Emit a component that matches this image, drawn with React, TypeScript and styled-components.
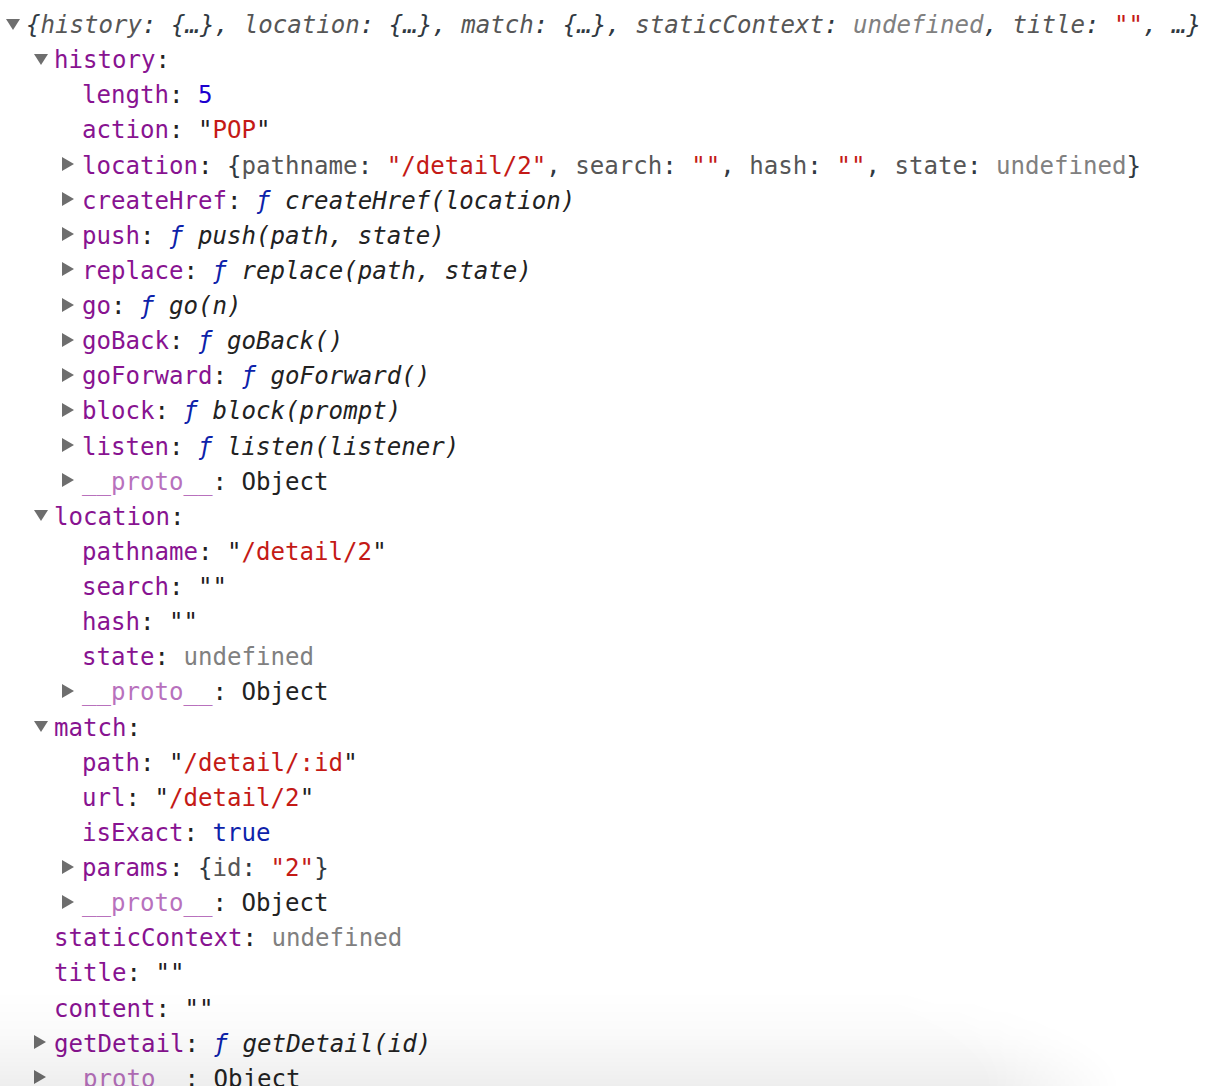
import React from "react";
import styled, { createGlobalStyle } from "styled-components";

const GlobalStyle = createGlobalStyle`
  html, body {
    margin: 0;
    padding: 0;
    background: #ffffff;
    overflow: hidden;
  }
`;

const Console = styled.div`
  position: relative;
  height: 1086px;
  overflow: hidden;
  padding-top: 8px;
  box-sizing: border-box;
  font-family: "DejaVu Sans Mono", "Liberation Mono", monospace;
  font-size: 24.1px;
  line-height: 35.14px;
  color: #222222;
`;

const Row = styled.div<{ $depth: number }>`
  display: flex;
  align-items: center;
  height: 35.14px;
  padding-left: ${(p) => p.$depth * 28 + 6}px;
  white-space: pre;
`;

const Toggle = styled.span`
  flex: none;
  width: 20px;
  height: 35.14px;
  display: flex;
  align-items: center;
  justify-content: flex-start;
  svg {
    display: block;
    margin-top: -4px;
  }
`;

const Key = styled.span<{ $dim?: boolean }>`
  color: ${(p) => (p.$dim ? "#b871bd" : "#881391")};
`;

const Str = styled.span`
  color: #c41a16;
`;

const Num = styled.span`
  color: #1c00cf;
`;

const Bool = styled.span`
  color: #0d22aa;
`;

const Undef = styled.span`
  color: #808080;
`;

const FnMark = styled.span`
  color: #0d22aa;
  font-style: italic;
`;

const Sig = styled.span`
  font-style: italic;
  color: #222222;
`;

const Preview = styled.span<{ $italic?: boolean }>`
  font-style: ${(p) => (p.$italic ? "italic" : "normal")};
  color: #303942;
`;

const PKey = styled.span`
  color: #565656;
`;

const BottomShade = styled.div`
  position: absolute;
  left: 0;
  right: 0;
  bottom: 0;
  height: 95px;
  pointer-events: none;
  background: linear-gradient(
    to bottom,
    rgba(0, 0, 0, 0) 0%,
    rgba(0, 0, 0, 0.02) 45%,
    rgba(0, 0, 0, 0.065) 100%
  );
  -webkit-mask-image: radial-gradient(
    ellipse 1120px 190px at 0% 100%,
    #000 88%,
    transparent 100%
  );
  mask-image: radial-gradient(
    ellipse 1120px 190px at 0% 100%,
    #000 88%,
    transparent 100%
  );
`;

type ToggleState = "open" | "closed" | null;

const Triangle: React.FC<{ state: ToggleState }> = ({ state }) => {
  if (!state) return <Toggle />;
  return (
    <Toggle>
      {state === "open" ? (
        <svg width="14" height="14" viewBox="0 0 14 14">
          <polygon points="0,2 14,2 7,13" fill="#6e6e6e" />
        </svg>
      ) : (
        <svg width="14" height="14" viewBox="0 0 14 14">
          <polygon points="0,0 12,7 0,14" fill="#6e6e6e" />
        </svg>
      )}
    </Toggle>
  );
};

type RowData = { depth: number; toggle: ToggleState; content: React.ReactNode };

const C = () => <span>: </span>;

const prop = (name: string, value: React.ReactNode, dim = false) => (
  <>
    <Key $dim={dim}>{name}</Key>
    <C />
    {value}
  </>
);

const fn = (name: string, sig: string) =>
  prop(
    name,
    <>
      <FnMark>ƒ</FnMark> <Sig>{sig}</Sig>
    </>
  );

const strVal = (s: string) => (
  <>
    "<Str>{s}</Str>"
  </>
);

const proto = prop("__proto__", <span>Object</span>, true);

const rows: RowData[] = [
  {
    depth: 0,
    toggle: "open",
    content: (
      <Preview $italic>
        {"{"}
        <PKey>history</PKey>: {"{…}"}, <PKey>location</PKey>: {"{…}"}, <PKey>match</PKey>: {"{…}"},{" "}
        <PKey>staticContext</PKey>: <Undef>undefined</Undef>, <PKey>title</PKey>: <Str>""</Str>, …{"}"}
      </Preview>
    ),
  },
  { depth: 1, toggle: "open", content: <><Key>history</Key>:</> },
  { depth: 2, toggle: null, content: prop("length", <Num>5</Num>) },
  { depth: 2, toggle: null, content: prop("action", strVal("POP")) },
  {
    depth: 2,
    toggle: "closed",
    content: prop(
      "location",
      <Preview>
        {"{"}
        <PKey>pathname</PKey>: <Str>"/detail/2"</Str>, <PKey>search</PKey>: <Str>""</Str>,{" "}
        <PKey>hash</PKey>: <Str>""</Str>, <PKey>state</PKey>: <Undef>undefined</Undef>
        {"}"}
      </Preview>
    ),
  },
  { depth: 2, toggle: "closed", content: fn("createHref", "createHref(location)") },
  { depth: 2, toggle: "closed", content: fn("push", "push(path, state)") },
  { depth: 2, toggle: "closed", content: fn("replace", "replace(path, state)") },
  { depth: 2, toggle: "closed", content: fn("go", "go(n)") },
  { depth: 2, toggle: "closed", content: fn("goBack", "goBack()") },
  { depth: 2, toggle: "closed", content: fn("goForward", "goForward()") },
  { depth: 2, toggle: "closed", content: fn("block", "block(prompt)") },
  { depth: 2, toggle: "closed", content: fn("listen", "listen(listener)") },
  { depth: 2, toggle: "closed", content: proto },
  { depth: 1, toggle: "open", content: <><Key>location</Key>:</> },
  { depth: 2, toggle: null, content: prop("pathname", strVal("/detail/2")) },
  { depth: 2, toggle: null, content: prop("search", <>""</>) },
  { depth: 2, toggle: null, content: prop("hash", <>""</>) },
  { depth: 2, toggle: null, content: prop("state", <Undef>undefined</Undef>) },
  { depth: 2, toggle: "closed", content: proto },
  { depth: 1, toggle: "open", content: <><Key>match</Key>:</> },
  { depth: 2, toggle: null, content: prop("path", strVal("/detail/:id")) },
  { depth: 2, toggle: null, content: prop("url", strVal("/detail/2")) },
  { depth: 2, toggle: null, content: prop("isExact", <Bool>true</Bool>) },
  {
    depth: 2,
    toggle: "closed",
    content: prop(
      "params",
      <Preview>
        {"{"}
        <PKey>id</PKey>: <Str>"2"</Str>
        {"}"}
      </Preview>
    ),
  },
  { depth: 2, toggle: "closed", content: proto },
  { depth: 1, toggle: null, content: prop("staticContext", <Undef>undefined</Undef>) },
  { depth: 1, toggle: null, content: prop("title", <>""</>) },
  { depth: 1, toggle: null, content: prop("content", <>""</>) },
  { depth: 1, toggle: "closed", content: fn("getDetail", "getDetail(id)") },
  { depth: 1, toggle: "closed", content: proto },
];

export default function App() {
  return (
    <>
      <GlobalStyle />
      <Console>
        {rows.map((r, i) => (
          <Row key={i} $depth={r.depth}>
            <Triangle state={r.toggle} />
            <span>{r.content}</span>
          </Row>
        ))}
        <BottomShade />
      </Console>
    </>
  );
}
